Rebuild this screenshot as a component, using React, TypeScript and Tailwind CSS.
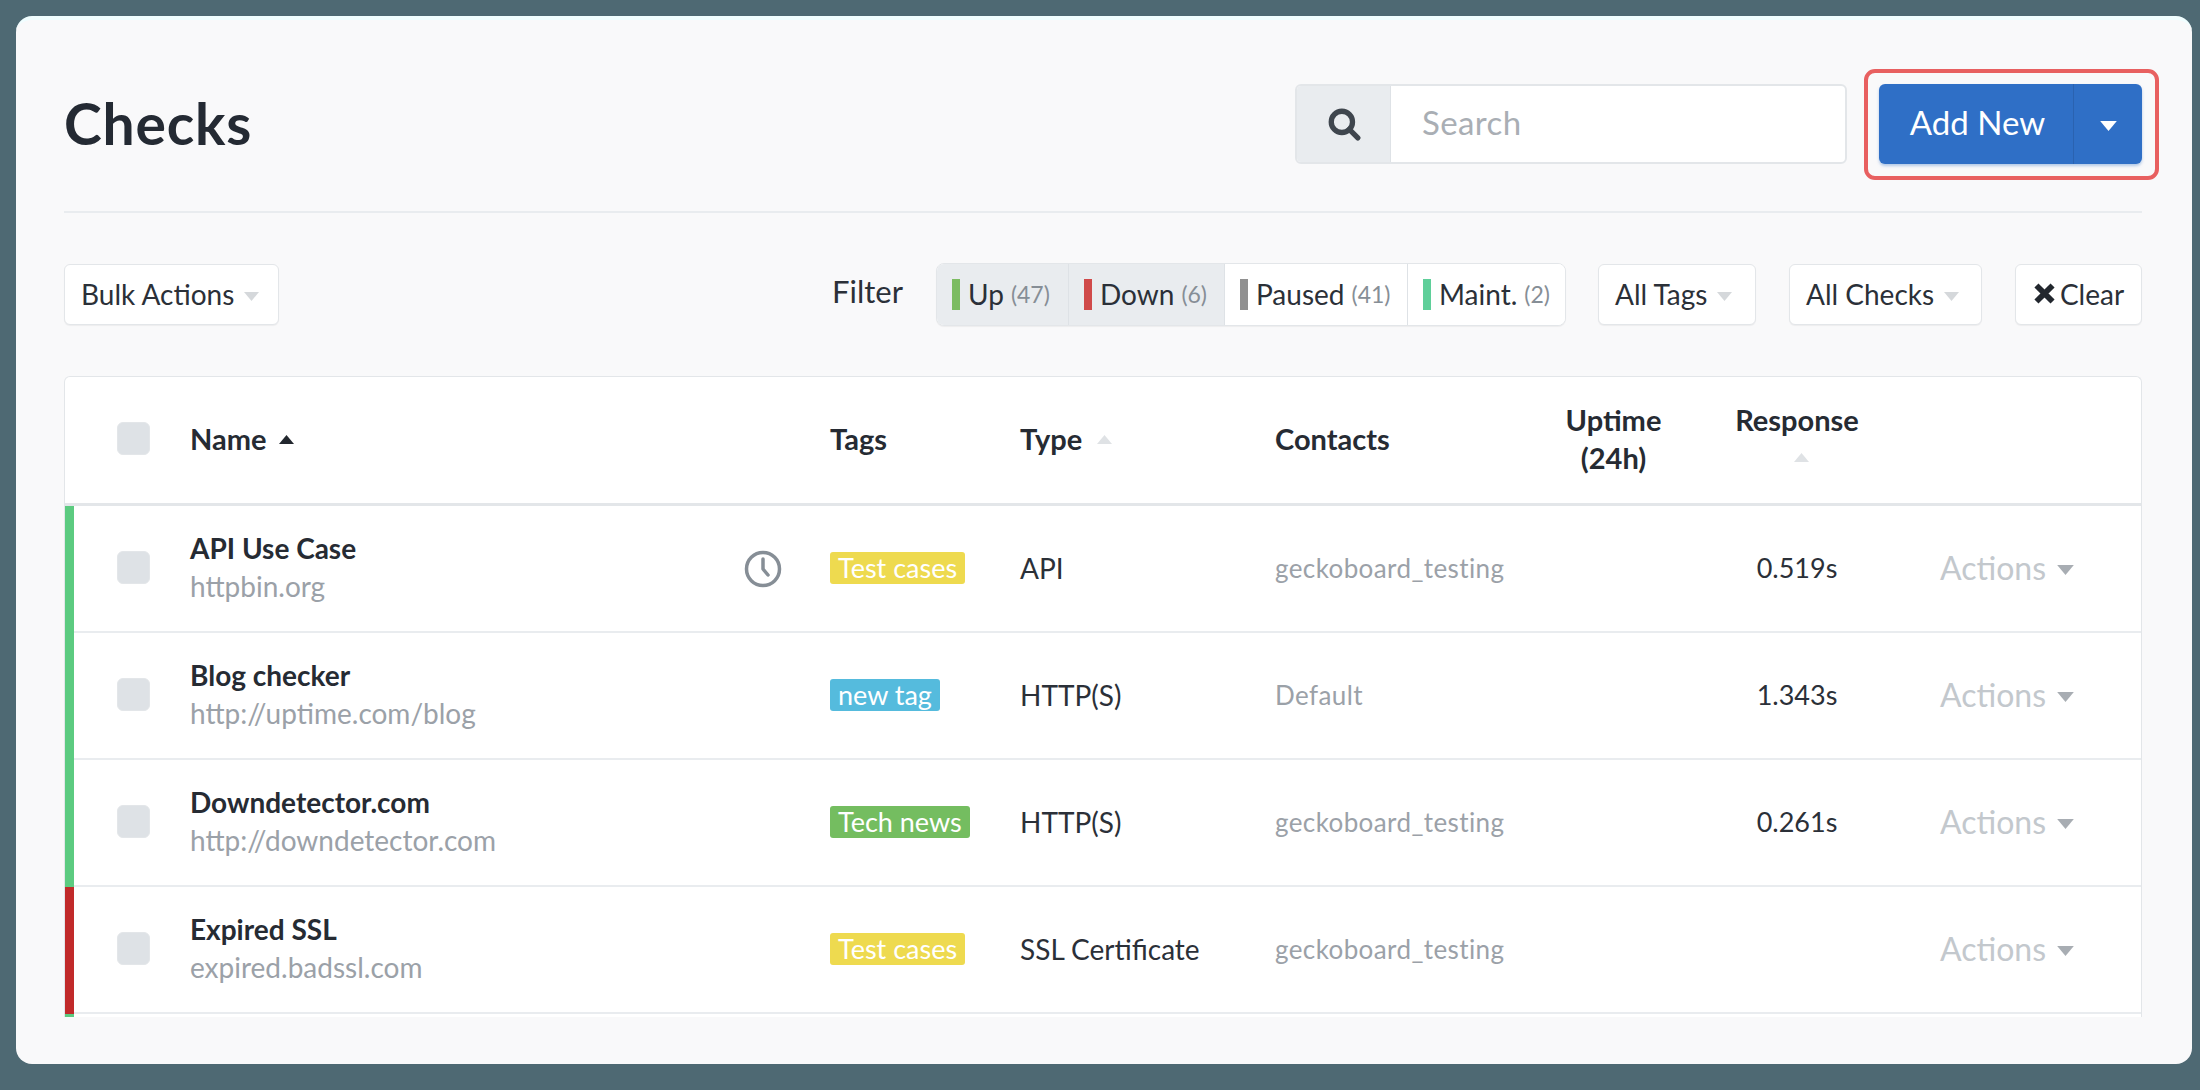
const font = "[font-family:'Lato','Liberation_Sans',sans-serif]";

function Caret({ className }: { className: string }) {
  return (
    <svg viewBox="0 0 10 6" className={className} fill="currentColor" aria-hidden="true">
      <path d="M0 0h10L5 6z" />
    </svg>
  );
}

function CaretUp({ className }: { className: string }) {
  return (
    <svg viewBox="0 0 10 6" className={className} fill="currentColor" aria-hidden="true">
      <path d="M0 6h10L5 0z" />
    </svg>
  );
}

function SelectBtn({ label, className }: { label: string; className: string }) {
  return (
    <button className={`h-[61px] flex items-center bg-white border border-[#e3e6e9] rounded-md pl-4 text-[28px] text-[#2b3038] shadow-[0_1px_1px_rgba(0,0,0,0.05)] ${className}`}>
      <span className="-mt-[2px]">{label}</span>
      <Caret className="w-[17px] h-[9px] text-[#d5d8db] ml-[9px] mt-1" />
    </button>
  );
}

function Seg({ color, label, count, active, className }: { color: string; label: string; count: string; active?: boolean; className: string }) {
  return (
    <div className={`h-full flex items-center pl-[15px] text-[28px] text-[#2b3038] ${active ? "bg-[#e9ecef]" : "bg-white"} ${className}`}>
      <span className={`w-[8px] h-[31px] mr-[8px] ${color}`} />
      <span className="-mt-[2px]">{label}</span>
      <span className="ml-[7px] text-[23px] text-[#868e96]">{count}</span>
    </div>
  );
}

function Checkbox() {
  return <span className="block w-[33px] h-[33px] rounded-md bg-[#dee2e6] border border-[#e3e6e9]" />;
}

type Row = {
  name: string;
  url: string;
  tag: string;
  tagColor: string;
  type: string;
  contact: string;
  response: string;
  bar: string;
  clock?: boolean;
};

const rows: Row[] = [
  { name: "API Use Case", url: "httpbin.org", tag: "Test cases", tagColor: "bg-[#eeda4f]", type: "API", contact: "geckoboard_testing", response: "0.519s", bar: "bg-[#5ccb80]", clock: true },
  { name: "Blog checker", url: "http://uptime.com/blog", tag: "new tag", tagColor: "bg-[#55bbdd]", type: "HTTP(S)", contact: "Default", response: "1.343s", bar: "bg-[#5ccb80]" },
  { name: "Downdetector.com", url: "http://downdetector.com", tag: "Tech news", tagColor: "bg-[#74bd60]", type: "HTTP(S)", contact: "geckoboard_testing", response: "0.261s", bar: "bg-[#5ccb80]" },
  { name: "Expired SSL", url: "expired.badssl.com", tag: "Test cases", tagColor: "bg-[#eeda4f]", type: "SSL Certificate", contact: "geckoboard_testing", response: "", bar: "bg-[#c12a2a]" },
];

const cols = "grid grid-cols-[125px_640px_190px_255px_256px_165px_202px_1fr] items-center";

function TableRow({ row }: { row: Row }) {
  return (
    <div className={`${cols} h-[127px] border-b-2 border-[#e9ecef] relative`}>
      <span className={`absolute left-0 top-0 -bottom-[2px] w-[9px] ${row.bar}`} />
      <div className="pl-[52px] pb-[3px]"><Checkbox /></div>
      <div className="flex items-center justify-between pr-[48px]">
        <div className="flex flex-col pb-[3px]">
          <span className="text-[28px] leading-[37px] font-bold text-[#262b33]">{row.name}</span>
          <span className="text-[28px] leading-[38px] text-[#9ba1a8]">{row.url}</span>
        </div>
        {row.clock && (
          <svg viewBox="0 0 38 38" className="w-[38px] h-[38px] text-[#868e96]" fill="none" stroke="currentColor" strokeWidth="3.5" aria-hidden="true">
            <circle cx="19" cy="19" r="16.5" />
            <path d="M19 9v10l5 6" strokeLinecap="round" strokeLinejoin="round" />
          </svg>
        )}
      </div>
      <div className="pb-[1px]">
        <span className={`inline-block h-[32px] leading-[32px] px-[8px] rounded-[3px] text-white text-[27px] ${row.tagColor}`}>{row.tag}</span>
      </div>
      <div className="text-[28px] text-[#2b3038] pb-[2px]">{row.type}</div>
      <div className="text-[26px] tracking-[0.4px] text-[#9ba1a8]">{row.contact}</div>
      <div />
      <div className="text-[27px] text-[#2b3038] text-center">{row.response}</div>
      <div className="flex items-center pl-[42px] text-[32px] text-[#c3c8cd] pb-[2px]">
        <span>Actions</span>
        <Caret className="w-[19px] h-[10px] ml-[10px] mt-1 text-[#a8adb3]" />
      </div>
    </div>
  );
}

export default function App() {
  return (
    <div className={`w-full h-[1090px] bg-[#4e6973] pl-4 pr-2 pt-4 pb-[26px] ${font}`}>
      <div className="h-[1048px] bg-[#f9f9fa] rounded-[16px] border-t-4 border-[#f0feff] overflow-hidden pl-12 pr-[50px] flex flex-col">
        <header className="h-[193px] shrink-0 border-b-2 border-[#e9ecef] flex items-center justify-between pt-[18px] pb-[2px]">
          <h1 className="text-[57px] tracking-[0.8px] font-bold text-[#242a33]">Checks</h1>
          <div className="flex items-center">
            <div className="flex w-[552px] h-[80px] rounded-md border-2 border-[#e3e6e9] overflow-hidden bg-white">
              <div className="w-[94px] bg-[#e9ecef] border-r border-[#dee2e6] flex items-center justify-center">
                <svg viewBox="0 0 32 32" className="w-[34px] h-[34px] text-[#3f464e]" fill="none" stroke="currentColor" strokeWidth="5" aria-hidden="true">
                  <circle cx="14" cy="14" r="10" />
                  <path d="M21 21l8 8" strokeLinecap="round" />
                </svg>
              </div>
              <div className="flex-1 flex items-center pl-[31px] pb-[2px] text-[33px] tracking-[0.4px] text-[#a9aeb4]">Search</div>
            </div>
            <div className="relative ml-[32px]">
              <div className="flex w-[263px] h-[80px] rounded-md bg-[#2f6fc6] text-white shadow-[0_2px_3px_rgba(47,111,198,0.35)]">
                <span className="w-[195px] flex items-center justify-center pl-[3px] pb-[2px] text-[33px] border-r border-[#2a62b0]">Add New</span>
                <span className="flex-1 flex items-center justify-center"><Caret className="w-[19px] h-[10px] mt-1" /></span>
              </div>
              <span className="absolute -left-[15px] -right-[17px] -top-[15px] -bottom-[16px] border-4 border-[#e86060] rounded-[11px]" />
            </div>
          </div>
        </header>

        <div className="h-[163px] shrink-0 flex items-center justify-between">
          <SelectBtn label="Bulk Actions" className="w-[215px]" />
          <div className="flex items-center">
            <span className="text-[31px] text-[#2b3038] mr-[33px] -mt-[6px]">Filter</span>
            <div className="flex h-[63px] w-[630px] border border-[#e3e6e9] rounded-lg overflow-hidden bg-white mr-[32px] shadow-[0_1px_1px_rgba(0,0,0,0.05)]">
              <Seg color="bg-[#7cbc62]" label="Up" count="(47)" active className="w-[132px] border-r border-[#dee2e6]" />
              <Seg color="bg-[#d04a4a]" label="Down" count="(6)" active className="w-[156px] border-r border-[#dee2e6]" />
              <Seg color="bg-[#909090]" label="Paused" count="(41)" className="w-[183px] border-r border-[#dee2e6]" />
              <Seg color="bg-[#5fcf9a]" label="Maint." count="(2)" className="flex-1" />
            </div>
            <SelectBtn label="All Tags" className="w-[158px] mr-[33px]" />
            <SelectBtn label="All Checks" className="w-[193px] mr-[33px]" />
            <button className="h-[61px] w-[127px] flex items-center justify-center bg-white border border-[#e3e6e9] rounded-md text-[28px] text-[#2b3038] shadow-[0_1px_1px_rgba(0,0,0,0.05)]">
              <svg viewBox="0 0 20 20" className="w-[23px] h-[23px] mr-[4px] -mt-[2px] text-[#22272e]" fill="none" stroke="currentColor" strokeWidth="5" aria-hidden="true">
                <path d="M3 3l14 14M17 3L3 17" />
              </svg>
              <span className="-mt-[2px]">Clear</span>
            </button>
          </div>
        </div>

        <div className="flex-1 min-h-0 overflow-hidden pb-[47px]">
          <div className="h-full overflow-hidden bg-white border border-[#e3e6e9] border-b-0 rounded-t-md">
            <div className={`${cols} h-[129px] border-b-[3px] border-[#e3e6e9] font-bold text-[29px] text-[#262b33]`}>
              <div className="pl-[52px] pb-[3px]"><Checkbox /></div>
              <div className="flex items-center pb-[2px]">Name<CaretUp className="w-[17px] h-[9px] ml-[12px] text-[#22272e]" /></div>
              <div className="pb-[2px]">Tags</div>
              <div className="flex items-center pb-[2px]">Type<CaretUp className="w-[17px] h-[9px] ml-[14px] text-[#dfe2e5]" /></div>
              <div className="pb-[2px]">Contacts</div>
              <div className="text-center leading-[38px] pb-[2px]">Uptime<br />(24h)</div>
              <div className="flex flex-col items-center leading-[38px] pb-[2px]">
                <span>Response</span>
                <CaretUp className="w-[17px] h-[9px] mt-[14px] mb-[15px] ml-[8px] text-[#dfe2e5]" />
              </div>
              <div />
            </div>
            {rows.map((r) => (
              <TableRow key={r.name} row={r} />
            ))}
            <div className="relative h-[4px]">
              <span className="absolute left-0 top-0 bottom-0 w-[9px] bg-[#5ccb80]" />
            </div>
          </div>
        </div>
      </div>
    </div>
  );
}
